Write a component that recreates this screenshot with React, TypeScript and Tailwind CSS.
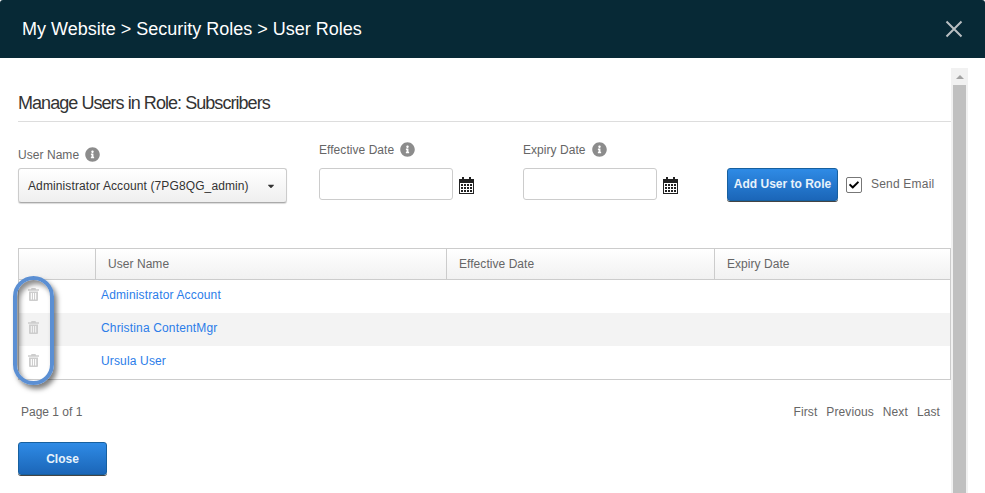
import { FaCaretDown, FaCheck, FaInfoCircle } from 'react-icons/fa';

const font = { fontFamily: '"Liberation Sans", Arial, sans-serif' };

function InfoIcon() {
  return <FaInfoCircle className="h-[15px] w-[15px] text-[#8c8c8c]" />;
}

function CalendarIcon() {
  return (
    <svg width="15" height="17" viewBox="0 0 15 17" className="mt-[3px] shrink-0">
      <path d="M0 2h15v15H0z" fill="#222" />
      <rect x="3" y="0" width="2" height="4" fill="#222" />
      <rect x="10" y="0" width="2" height="4" fill="#222" />
      <rect x="1" y="6" width="13" height="10" fill="#fff" />
      {[7, 10, 13].map((y) =>
        [2, 5, 8, 11].map((x) => <rect key={`${x}-${y}`} x={x} y={y} width="2" height="2" fill="#222" />),
      )}
    </svg>
  );
}

function TrashIcon() {
  return (
    <svg width="11" height="13" viewBox="0 0 11 13" fill="#cdcdcd">
      <path d="M3.500 0h4l.5 1.200h3v1.600H0V1.200h3z" />
      <path d="M1 3.500h9V12a1 1 0 0 1-1 1H2a1 1 0 0 1-1-1zM2.800 5v6.500h1.100V5zm2.150 0v6.500h1.100V5zm2.150 0v6.500h1.100V5z" fillRule="evenodd" />
    </svg>
  );
}

function DateField({ label }: { label: string }) {
  return (
    <div className="flex flex-col">
      <div className="flex h-[15px] items-center gap-[6px] text-[12px] tracking-[0.05px] text-[#666]">
        {label} <InfoIcon />
      </div>
      <div className="mt-[11px] flex items-center gap-[6px]">
        <div className="h-[32px] w-[134px] rounded-[3px] border border-[#ccc] bg-white" />
        <CalendarIcon />
      </div>
    </div>
  );
}

const rows = ['Administrator Account', 'Christina ContentMgr', 'Ursula User'];

export default function App() {
  return (
    <div className="relative flex h-[493px] w-[985px] flex-col overflow-hidden bg-white" style={font}>
      <header className="flex h-[58px] shrink-0 items-center justify-between rounded-t-[3px] bg-[#072936] px-[22px]">
        <h1 className="text-[18px] text-white">My Website &gt; Security Roles &gt; User Roles</h1>
        <svg width="18" height="18" viewBox="0 0 18 18" stroke="#b9bfc2" strokeWidth="2">
          <path d="M1.500 1.500l15 15M16.500 1.500l-15 15" />
        </svg>
      </header>

      <div className="flex flex-1 overflow-hidden pl-[18px] pt-[10px]">
        <main className="w-[933px] shrink-0">
          <div className="border-b border-[#ddd] pb-[7px] pt-[25px]">
            <h2 className="text-[18px] leading-[21px] tracking-[-0.95px] text-[#333]">Manage Users in Role: Subscribers</h2>
          </div>

          <div className="mt-[20px] flex items-start">
            <div className="mt-[5px] w-[301px]">
              <div className="flex h-[15px] items-center gap-[6px] text-[12px] tracking-[0.05px] text-[#666]">
                User Name <InfoIcon />
              </div>
              <div className="mt-[6px] flex h-[35px] w-[269px] items-center justify-between rounded-[3px] border border-[#ccc] border-b-[#aaa] bg-gradient-to-b from-white to-[#efefef] pl-[9px] pr-[11px] text-[12px] tracking-[0.11px] text-[#333] shadow-[0_1px_1px_rgba(0,0,0,0.15)]">
                Administrator Account (7PG8QG_admin)
                <FaCaretDown className="h-[10px] w-[8px] text-[#333]" />
              </div>
            </div>
            <div className="w-[204px]">
              <DateField label="Effective Date" />
            </div>
            <div className="w-[204px]">
              <DateField label="Expiry Date" />
            </div>
            <div className="mt-[26px] flex items-center">
              <button className="h-[33px] w-[111px] rounded-[3px] border border-[#17609f] bg-gradient-to-b from-[#2f8be6] to-[#1b66b8] pb-[2px] text-[12px] font-bold text-[#e8f2fb] shadow-[0_1px_0_#444]">
                Add User to Role
              </button>
              <span className="ml-[8px] flex h-[16px] w-[16px] items-center justify-center rounded-[2px] border border-[#777] bg-white">
                <FaCheck className="h-[10px] w-[10px] text-black" />
              </span>
              <span className="ml-[9px] pb-[2px] text-[12px] tracking-[0.2px] text-[#666]">Send Email</span>
            </div>
          </div>

          <div className="mt-[45px] border border-[#ccc] text-[12px]">
            <div className="flex h-[31px] items-center border-b border-[#ccc] bg-gradient-to-b from-white to-[#f1f1f1] tracking-[0.05px] text-[#666]">
              <div className="h-full w-[77px] border-r border-[#ccc]" />
              <div className="flex h-full w-[351px] items-center border-r border-[#ccc] pl-[12px]">User Name</div>
              <div className="flex h-full w-[268px] items-center border-r border-[#ccc] pl-[12px]">Effective Date</div>
              <div className="flex h-full flex-1 items-center pl-[12px]">Expiry Date</div>
            </div>
            {rows.map((name, i) => (
              <div key={name} className={`flex h-[33px] items-center pb-[4px] ${i === 1 ? 'bg-[#f3f3f3]' : 'bg-white'}`}>
                <div className="flex w-[77px] pl-[9px]">
                  <TrashIcon />
                </div>
                <a className="pl-[5px] tracking-[0.15px] text-[#2b7de9]">{name}</a>
              </div>
            ))}
          </div>

          <div className="mt-[23px] flex items-center justify-between pl-[3px] pr-[11px] text-[12px] text-[#666]">
            <span>Page 1 of 1</span>
            <div className="flex gap-[9px] tracking-[0.1px]">
              <span>First</span>
              <span>Previous</span>
              <span>Next</span>
              <span>Last</span>
            </div>
          </div>

          <button className="mt-[21px] h-[33px] w-[89px] rounded-[3px] border border-[#17609f] bg-gradient-to-b from-[#2f8be6] to-[#1b66b8] text-[12px] font-bold text-[#e8f2fb] shadow-[0_1px_0_#444]">
            Close
          </button>
        </main>

        {/* scrollbar */}
        <div className="flex w-[17px] shrink-0 flex-col items-center bg-[#f1f1f1]">
          <div className="flex h-[17px] items-center justify-center">
            <div className="h-0 w-0 border-x-[4px] border-b-[4px] border-x-transparent border-b-[#a3a3a3]" />
          </div>
          <div className="w-[13px] flex-1 bg-[#c0c0c0]" />
        </div>
      </div>

      {/* annotation oval */}
      <div className="absolute left-[13px] top-[276px] h-[109px] w-[41px] rounded-[21px] border-[4px] border-[#5b8fd3] shadow-[3px_4px_5px_rgba(0,0,0,0.5),inset_3px_4px_5px_rgba(0,0,0,0.45)]" />
    </div>
  );
}
